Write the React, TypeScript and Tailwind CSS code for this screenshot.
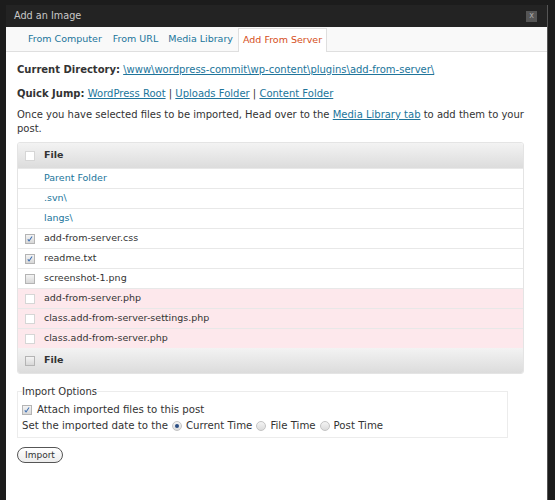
import React from "react";

const font = { fontFamily: '"DejaVu Sans", Verdana, sans-serif' };

function Box(props: { checked?: boolean; light?: boolean }) {
  const { checked, light } = props;
  return (
    <span
      className={
        "relative inline-block w-[10px] h-[10px] border shrink-0 " +
        (light
          ? "border-[#d6d6d6] bg-white"
          : "border-[#b4b4b4] bg-gradient-to-b from-[#f4f4f4] to-[#d8d8d8]")
      }
    >
      {checked && (
        <svg viewBox="0 0 10 10" className="absolute left-0 top-0 w-[8px] h-[8px]">
          <path d="M2.2 5.4 L3.8 7.4 L7.6 1.8" fill="none" stroke="#3d6fb3" strokeWidth="1.3" />
        </svg>
      )}
    </span>
  );
}

function Radio(props: { on?: boolean }) {
  return (
    <span className="inline-flex items-center justify-center w-[10px] h-[10px] rounded-full border border-[#c4c4c4] bg-gradient-to-b from-[#f4f4f4] to-[#dcdcdc]">
      {props.on && <span className="w-[4px] h-[4px] rounded-full bg-[#2a4d82]" />}
    </span>
  );
}

const rows = [
  { name: "Parent Folder", dir: true },
  { name: ".svn\\", dir: true },
  { name: "langs\\", dir: true },
  { name: "add-from-server.css", checked: true },
  { name: "readme.txt", checked: true },
  { name: "screenshot-1.png" },
  { name: "add-from-server.php", bad: true },
  { name: "class.add-from-server-settings.php", bad: true },
  { name: "class.add-from-server.php", bad: true },
];

export default function App() {
  return (
    <div className="w-[555px] h-[500px] bg-[#1c1c1c] pt-[5px] pl-[6px] pr-[7px] overflow-hidden" style={font}>
      <div className="h-full flex flex-col border-r border-[#555]">
        <div className="h-[22px] bg-[#232323] flex items-center justify-between pl-[8px] pr-[10px]">
          <span className="text-[9.7px] text-[#c8c8c8]">Add an Image</span>
          <span className="w-[11px] h-[11px] bg-[#555] flex items-center justify-center text-[8px] text-[#aaa] leading-none">
            x
          </span>
        </div>
        <div className="flex-1 bg-white flex flex-col">
          <div className="h-[25px] bg-[#f9f9f9] border-b border-[#dfdfdf] flex items-end pl-[16px] text-[9.5px] text-[#21759b]">
            <span className="px-[6px] h-[23px] flex items-center">From Computer</span>
            <span className="px-[5px] h-[23px] flex items-center">From URL</span>
            <span className="px-[5px] h-[23px] flex items-center">Media Library</span>
            <span className="px-[4px] h-[24px] flex items-center bg-white border border-b-0 border-[#dfdfdf] text-[#d54e21] -mb-px">
              Add From Server
            </span>
          </div>
          <div className="pl-[11px] pr-[18px] text-[10px] text-[#333]">
            <div className="mt-[11px] leading-[14px]">
              <b>Current Directory:</b>{" "}
              <span className="text-[#21759b] underline">\www\wordpress-commit\wp-content\plugins\add-from-server\</span>
            </div>
            <div className="mt-[10px] leading-[14px]">
              <b>Quick Jump:</b> <span className="text-[#21759b] underline">WordPress Root</span> |{" "}
              <span className="text-[#21759b] underline">Uploads Folder</span> |{" "}
              <span className="text-[#21759b] underline">Content Folder</span>
            </div>
            <p className="mt-[7px] leading-[14px]">
              Once you have selected files to be imported, Head over to the{" "}
              <span className="text-[#21759b] underline">Media Library tab</span> to add them to your
              <br />
              post.
            </p>
            <div className="mt-[6px] w-[507px] rounded-[3px] border border-[#e4e4e4] overflow-hidden text-[9.5px]">
              <div className="h-[25px] bg-gradient-to-b from-[#f3f3f3] to-[#dcdcdc] flex items-center pl-[7px] gap-[9px] font-bold">
                <Box light />
                File
              </div>
              {rows.map((r) => (
                <div
                  key={r.name}
                  className={
                    "h-[20px] flex items-center pl-[7px] gap-[9px] border-t border-[#e8e8e8] " +
                    (r.bad ? "bg-[#fde8ec]" : "bg-white")
                  }
                >
                  {r.dir ? <span className="w-[10px]" /> : <Box checked={r.checked} light={r.bad} />}
                  <span className={r.dir ? "text-[#21759b]" : "text-[#333]"}>{r.name}</span>
                </div>
              ))}
              <div className="h-[25px] bg-gradient-to-b from-[#f3f3f3] to-[#dcdcdc] flex items-center pl-[7px] gap-[9px] font-bold">
                <Box />
                File
              </div>
            </div>
            <fieldset className="mt-[10px] w-[491px] border border-[#ececec] px-[4px] pb-[4px]">
              <legend className="text-[10px] text-[#333]">Import Options</legend>
              <div className="flex items-center gap-[5px] text-[10.2px] mt-[4px] h-[14px]">
                <Box checked />
                Attach imported files to this post
              </div>
              <div className="flex items-center gap-[4px] text-[10.2px] mt-[2px] h-[14px]">
                Set the imported date to the <Radio on /> Current Time <Radio /> File Time <Radio /> Post Time
              </div>
            </fieldset>
            <button className="mt-[9px] h-[16px] px-[7px] rounded-full border border-[#555] bg-gradient-to-b from-white to-[#ececec] text-[9px] text-[#333] leading-none">
              Import
            </button>
          </div>
        </div>
      </div>
    </div>
  );
}
